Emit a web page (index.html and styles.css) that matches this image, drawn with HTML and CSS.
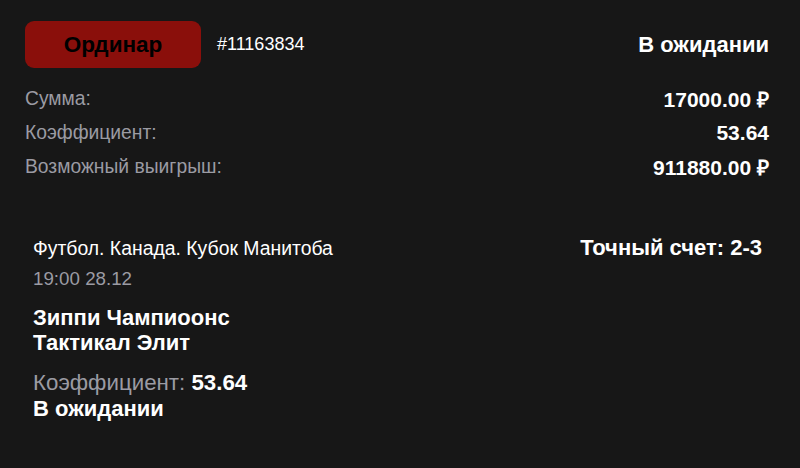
FILE: index.html
```html
<!DOCTYPE html>
<html lang="ru">
<head>
<meta charset="utf-8">
<link rel="stylesheet" href="styles.css">
</head>
<body>
<div class="card">
  <div class="head">
    <div class="type">Ординар</div>
    <div class="id">#11163834</div>
    <div class="status">В ожидании</div>
  </div>
  <div class="rows">
    <div class="row"><span class="label">Сумма:</span><span class="val">17000.00 ₽</span></div>
    <div class="row"><span class="label">Коэффициент:</span><span class="val">53.64</span></div>
    <div class="row"><span class="label">Возможный выигрыш:</span><span class="val">911880.00 ₽</span></div>
  </div>
  <div class="event">
    <div class="event-top">
      <div class="league">Футбол. Канада. Кубок Манитоба</div>
      <div class="market">Точный счет: 2-3</div>
    </div>
    <div class="time">19:00 28.12</div>
    <div class="teams">
      <div>Зиппи Чампиоонс</div>
      <div>Тактикал Элит</div>
    </div>
    <div class="coef"><span class="coef-label">Коэффициент:</span> <b>53.64</b></div>
    <div class="ev-status">В ожидании</div>
  </div>
</div>
</body>
</html>
```
FILE: styles.css
```css
html, body {
  margin: 0;
  padding: 0;
  background: #171717;
}
body {
  font-family: "Liberation Sans", Arial, sans-serif;
  color: #ffffff;
  width: 800px;
  height: 468px;
  overflow: hidden;
}
.card {
  padding: 21px 31px 0 25px;
}
.head {
  display: flex;
  align-items: center;
  height: 47px;
}
.type {
  width: 176px;
  height: 47px;
  background: #8a0f0b;
  border-radius: 9px;
  color: #000;
  font-weight: bold;
  font-size: 22.5px;
  display: flex;
  align-items: center;
  justify-content: center;
}
.id {
  margin-left: 16px;
  font-size: 18px;
}
.status {
  margin-left: auto;
  font-weight: bold;
  font-size: 22px;
}
.rows {
  margin-top: 14px;
  display: flex;
  flex-direction: column;
}
.row {
  display: flex;
  justify-content: space-between;
  align-items: center;
  height: 34px;
}
.label {
  color: #9b9ba3;
  font-size: 19.3px;
}
.val {
  font-weight: bold;
  font-size: 21px;
}
.event {
  margin-top: 52px;
  padding: 0 7px 0 8px;
}
.event-top {
  display: flex;
  justify-content: space-between;
  align-items: baseline;
  line-height: 24px;
}
.league {
  font-size: 19.4px;
}
.market {
  font-weight: bold;
  font-size: 22px;
}
.time {
  margin-top: 8px;
  color: #9b9ba3;
  font-size: 18.75px;
  line-height: 22px;
}
.teams {
  margin-top: 15px;
  font-weight: bold;
  font-size: 22px;
  line-height: 25px;
}
.coef {
  margin-top: 15px;
  font-size: 22.3px;
  line-height: 26px;
}
.coef-label {
  color: #9b9ba3;
}
.ev-status {
  font-weight: bold;
  font-size: 22px;
  line-height: 26px;
}
```
